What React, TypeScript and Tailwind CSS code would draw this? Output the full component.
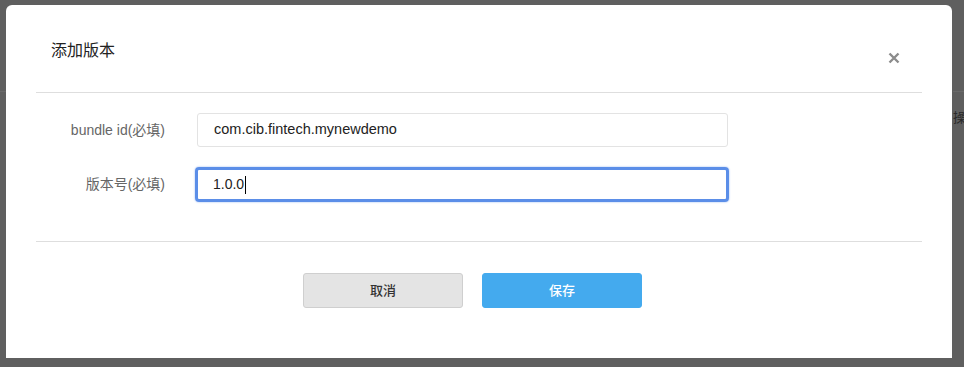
import React from "react";

export default function App() {
  const font = { fontFamily: '"Helvetica Neue", "Liberation Sans", "Noto Sans CJK SC", sans-serif' };
  return (
    <div className="w-[964px] h-[367px] bg-[#5f5f5f] pt-[5px] pl-[6px] overflow-hidden relative" style={font}>
      <div className="absolute right-0 top-[91px] w-[11px] h-px bg-[#6a6a6a]" />
      <div className="absolute left-0 top-[91px] w-[6px] h-px bg-[#6a6a6a]" />
      <div className="absolute left-[953px] top-[111px] text-[13px] text-[#2a2a2a] leading-none">操</div>
      <div className="w-[946px] h-[353px] bg-white rounded-t-[6px] px-[30px] flex flex-col">
        <div className="h-[88px] border-b border-[#dedede] flex items-start justify-between pl-[15px] pr-[22px]">
          <div className="mt-[36px] text-[16px] text-[#222] leading-[20px]">添加版本</div>
          <svg className="mt-[47px]" width="12" height="12" viewBox="0 0 12 12">
            <path d="M1.5 1.5 L10.5 10.5 M10.5 1.5 L1.5 10.5" stroke="#8c8c8c" strokeWidth="2.4" strokeLinecap="butt" />
          </svg>
        </div>
        <div className="h-[149px] border-b border-[#dedede] flex flex-col pt-[20px] gap-[20px]">
          <div className="flex items-center">
            <div className="w-[129px] text-right text-[14px] text-[#666]">bundle id(必填)</div>
            <div className="ml-[32px] w-[531px] h-[34px] border border-[#e3e3e3] rounded-[3px] flex items-center pl-[16px] text-[14.5px] text-[#222]">
              com.cib.fintech.mynewdemo
            </div>
          </div>
          <div className="flex items-center">
            <div className="w-[129px] text-right text-[14px] text-[#666]">版本号(必填)</div>
            <div className="ml-[30px] w-[534px] h-[35px] border-[3px] border-[#5b8ee8] rounded-[4px] shadow-[0_0_2px_#8fb3f0] flex items-center pl-[15px] text-[14px] text-[#222]">
              1.0.0<span className="inline-block w-px h-[18px] bg-black ml-px" />
            </div>
          </div>
        </div>
        <div className="flex justify-center gap-[19px] pt-[31px] pr-[13px]">
          <button className="w-[160px] h-[35px] bg-[#e4e4e4] border border-[#cfcfcf] rounded-[3px] text-[13px] font-medium text-[#333]">取消</button>
          <button className="w-[160px] h-[35px] bg-[#44aaee] border border-[#44aaee] rounded-[3px] text-[13px] font-medium text-white">保存</button>
        </div>
      </div>
    </div>
  );
}
